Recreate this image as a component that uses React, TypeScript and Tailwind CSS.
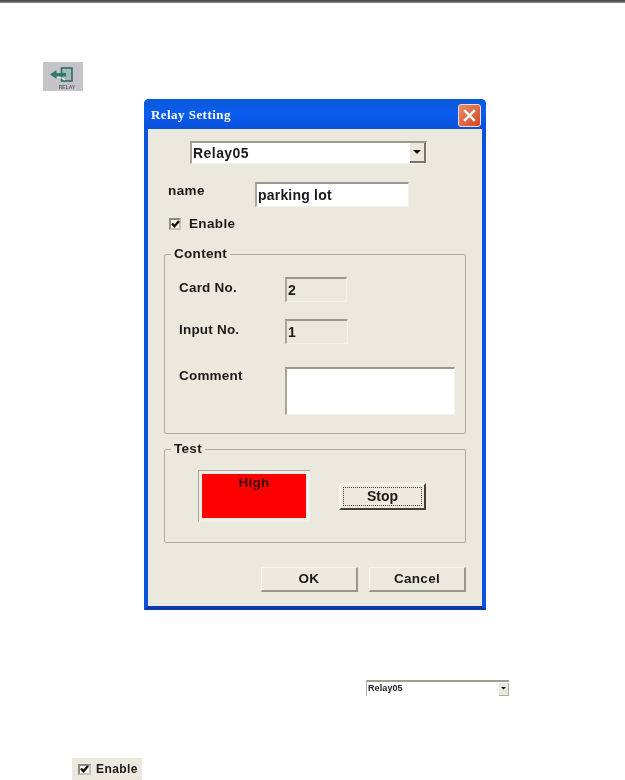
import React from "react";

const ui = { fontFamily: '"Liberation Sans", Arial, sans-serif' };

function Check({ small }: { small?: boolean }) {
  return (
    <div className={`flex items-center justify-center bg-[#f8f7f2] border-2 border-t-[#8a8a80] border-l-[#8a8a80] border-r-[#c4c2b6] border-b-[#c4c2b6] ${small ? "w-[13px] h-[11px]" : "w-[12px] h-[12px]"}`}>
      <svg width="9" height="8" viewBox="0 0 9 8" className="shrink-0">
        <path d="M1 3.5 L3.5 6.2 L8 1" fill="none" stroke="#111" strokeWidth="2.4" />
      </svg>
    </div>
  );
}

function Arrow({ w }: { w: number }) {
  return (
    <svg width={w} height={w / 2} viewBox="0 0 8 4">
      <path d="M0 0H8L4 4Z" fill="#111" />
    </svg>
  );
}

function Sunken({ className, children }: { className: string; children?: React.ReactNode }) {
  return (
    <div className={`border-t-2 border-l-2 border-r border-b border-t-[#9a9888] border-l-[#a8a698] border-r-[#f4f2ea] border-b-[#f4f2ea] ${className}`}>
      {children}
    </div>
  );
}

function Group({ title, className, children }: { title: string; className: string; children: React.ReactNode }) {
  return (
    <div className={`relative ml-[16px] w-[302px] border border-[#aeaca0] rounded-[2px] ${className}`}>
      <span className="absolute left-[6px] -top-[10px] bg-[#ebe8de] px-[3px] text-[13.5px] leading-[18px] font-bold text-[#1a1a1a] tracking-[0.3px]">
        {title}
      </span>
      {children}
    </div>
  );
}

function Btn({ children }: { children: React.ReactNode }) {
  return (
    <div className="w-[97px] h-[25px] flex items-center justify-center bg-[#ece9df] border-r-2 border-b-2 border-l border-t border-r-[#9a9888] border-b-[#9a9888] border-l-[#f8f6ee] border-t-[#f8f6ee] text-[13.5px] font-bold text-[#1a1a1a] tracking-[0.3px]">
      {children}
    </div>
  );
}

export default function App() {
  return (
    <div className="relative w-[625px] h-[780px] overflow-hidden bg-white blur-[0.35px]" style={ui}>
      <div className="h-[3px] bg-gradient-to-b from-[#3c3c3c] to-[#8f8f8f]" />

      {/* toolbar icon */}
      <div className="ml-[43px] mt-[59px] w-[40px] h-[29px] bg-[#c6c4c8] flex flex-col items-center">
        <svg width="26" height="17" viewBox="0 0 26 17" className="mt-[4px] shrink-0">
          <rect x="11.5" y="2" width="10.5" height="13" fill="#9fbdb4" stroke="#2f6d60" strokeWidth="1.6" />
          <path d="M0 8.5 L6.5 4 V7 H16 V10.5 H6.5 V13 Z" fill="#2f7a6a" />
          <path d="M7 11.5 Q12 11 15 14" fill="none" stroke="#e6ecea" strokeWidth="1.2" />
        </svg>
        <span className="text-[5px] leading-[6px] font-bold text-[#5a6470] mt-[1px] ml-[8px]">RELAY</span>
      </div>

      {/* dialog */}
      <div className="ml-[144px] mt-[8px] w-[342px] h-[511px] flex flex-col rounded-t-[5px] bg-[#0a4fd8] border-x-4 border-b-4 border-x-[#0b52dc] border-b-[#0a3aa8]">
        <div className="-mx-[4px] h-[30px] shrink-0 flex items-center justify-between pl-[7px] pr-[5px] rounded-t-[5px] bg-gradient-to-b from-[#0a5ad8] via-[#0a5cf0] to-[#0750d8]">
          <span className="text-[13px] font-bold text-white tracking-[0.45px] mt-[2px]" style={{ fontFamily: '"Liberation Serif", serif' }}>
            Relay Setting
          </span>
          <div className="w-[23px] h-[23px] mt-[2px] flex items-center justify-center rounded-[3px] border border-[#f0dcd4] bg-gradient-to-br from-[#e88a68] to-[#d6431f]">
            <svg width="13" height="13" viewBox="0 0 11 11">
              <path d="M1 1 L10 10 M10 1 L1 10" stroke="#fff" strokeWidth="2" />
            </svg>
          </div>
        </div>

        <div className="flex-1 bg-[#ebe8de] flex flex-col text-[#1a1a1a]">
          {/* combo */}
          <Sunken className="ml-[42px] mt-[12px] w-[237px] h-[23px] bg-white flex items-center justify-between">
            <span className="pl-[1px] text-[14px] font-bold tracking-[0.45px]">Relay05</span>
            <div className="w-[16px] h-[20px] bg-[#ebe8de] border-r-2 border-b-2 border-r-[#77756a] border-b-[#77756a] flex items-center justify-center">
              <Arrow w={8} />
            </div>
          </Sunken>

          {/* name */}
          <div className="mt-[18px] ml-[20px] flex items-start">
            <span className="w-[87px] text-[13.5px] leading-[18px] font-bold tracking-[0.4px]">name</span>
            <Sunken className="w-[154px] h-[25px] bg-white flex items-center pl-[1px] text-[14px] font-bold tracking-[0.2px]">
              parking lot
            </Sunken>
          </div>

          {/* enable */}
          <div className="mt-[10px] ml-[21px] flex items-center gap-[8px] h-[15px]">
            <div className="-mt-[2px]">
              <Check />
            </div>
            <span className="text-[13.5px] font-bold tracking-[0.35px]">Enable</span>
          </div>

          {/* Content */}
          <Group title="Content" className="mt-[22px] h-[180px] pt-[22px]">
            <div className="flex flex-col pl-[14px] text-[13.5px] font-bold tracking-[0.2px]">
              <div className="flex items-center h-[25px]">
                <span className="w-[106px] -mt-[2px]">Card No.</span>
                <Sunken className="w-[62px] h-[25px] flex items-center pl-[1px] text-[14px]">2</Sunken>
              </div>
              <div className="flex items-center h-[25px] mt-[17px]">
                <span className="w-[106px] -mt-[2px]">Input No.</span>
                <Sunken className="w-[63px] h-[25px] flex items-center pl-[1px] text-[14px]">1</Sunken>
              </div>
              <div className="flex items-start mt-[23px]">
                <span className="w-[106px] leading-[18px]">Comment</span>
                <Sunken className="w-[170px] h-[48px] bg-white" />
              </div>
            </div>
          </Group>

          {/* Test */}
          <Group title="Test" className="mt-[15px] h-[94px] pt-[20px] pl-[33px]">
            <div className="flex items-start">
              <div className="w-[112px] h-[52px] border-t border-l border-[#a8a698] border-r-0 border-b-0 p-[3px] bg-[#f2efe6]">
                <div className="h-[44px] w-[104px] bg-[#fe0000] text-center text-[13.5px] leading-[18px] font-bold text-[#3a0808] tracking-[0.2px]">
                  High
                </div>
              </div>
              <div className="ml-[29px] mt-[13px] w-[87px] h-[27px] border-2 border-t-[#f8f6ee] border-l-[#f8f6ee] border-r-[#3f3e38] border-b-[#3f3e38] bg-[#ece9df] p-[2px]">
                <div className="h-full border border-dotted border-[#444] flex items-center justify-center text-[14px] font-bold">
                  Stop
                </div>
              </div>
            </div>
          </Group>

          {/* buttons */}
          <div className="mt-[24px] ml-[113px] flex gap-[11px]">
            <Btn>OK</Btn>
            <Btn>Cancel</Btn>
          </div>
        </div>
      </div>

      {/* small combo */}
      <div className="ml-[366px] mt-[70px] w-[143px] h-[16px] bg-white border-t-2 border-t-[#a09e90] border-l border-l-[#b0ae9f] flex items-center justify-between">
        <span className="pl-[1px] text-[9px] font-bold text-[#222] tracking-[0.1px]">Relay05</span>
        <div className="w-[10px] h-[13px] bg-[#ebe8de] border-r border-b border-[#b0ae9f] flex items-center justify-center">
          <Arrow w={5} />
        </div>
      </div>

      {/* enable sample */}
      <div className="ml-[72px] mt-[62px] w-[70px] h-[22px] bg-[#ebe8de] flex items-center pl-[6px] gap-[5px]">
        <Check small />
        <span className="text-[12px] font-bold text-[#1a1a1a] tracking-[0.4px]">Enable</span>
      </div>
    </div>
  );
}
